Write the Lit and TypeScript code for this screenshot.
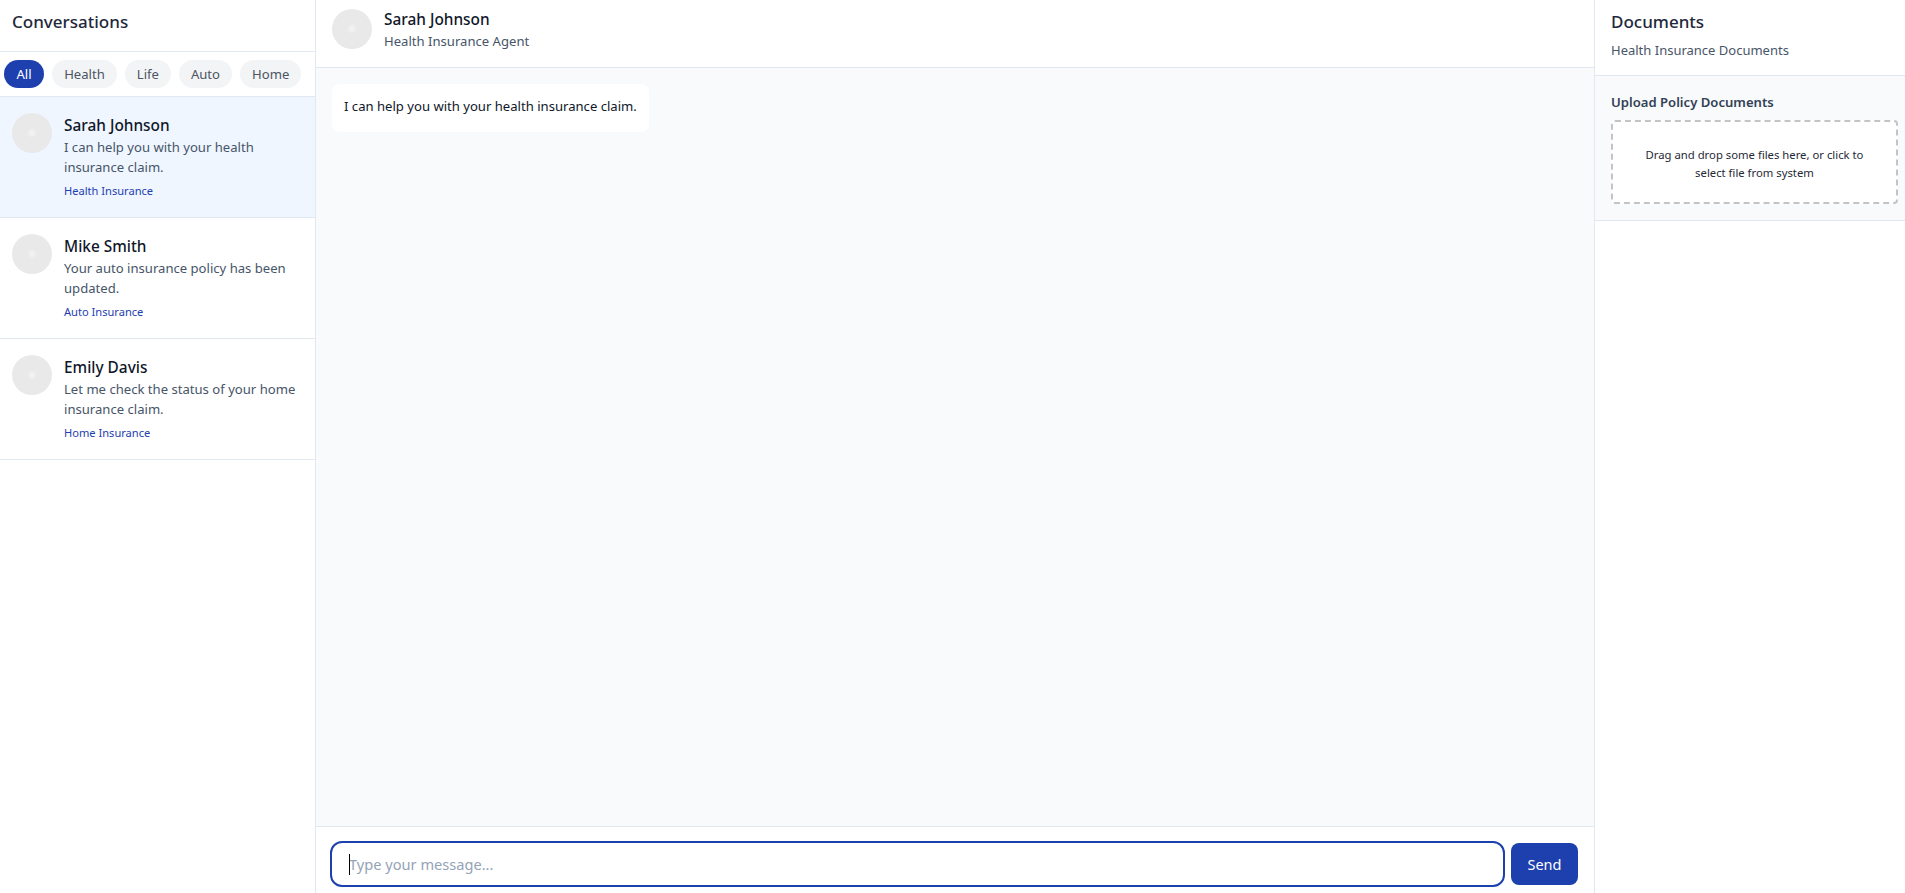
import { LitElement, html, css } from "lit";
import { customElement } from "lit/decorators.js";

const convs = [
  { name: "Sarah Johnson", msg: "I can help you with your health insurance claim.", tag: "Health Insurance", active: true },
  { name: "Mike Smith", msg: "Your auto insurance policy has been updated.", tag: "Auto Insurance", active: false },
  { name: "Emily Davis", msg: "Let me check the status of your home insurance claim.", tag: "Home Insurance", active: false },
];
const pills = ["All", "Health", "Life", "Auto", "Home"];

@customElement("app-root")
export class AppRoot extends LitElement {
  static styles = css`
    :host { display: block; height: 893px; font-family: "Noto Sans", "Open Sans", sans-serif; color: #1e293b; overflow: hidden; }
    * { box-sizing: border-box; }
    .app { display: flex; height: 893px; background: #fff; }
    .left { width: 316px; flex: none; border-right: 1px solid #e2e8f0; display: flex; flex-direction: column; }
    .left-head { height: 52px; padding: 0 12px 9px; border-bottom: 1px solid #e2e8f0; display: flex; align-items: center; font-size: 17px; font-weight: 500; }
    .pills { height: 45px; padding: 8px 4px; display: flex; gap: 8px; border-bottom: 1px solid #e2e8f0; }
    .pill { height: 28px; padding: 0 12px; border-radius: 14px; background: #f3f4f6; color: #4b5563; font-size: 13.1px; display: flex; align-items: center; }
    .pill.on { background: #1e40af; color: #fff; padding: 0 12.5px; }
    .item { height: 121px; padding: 16px 12px; display: flex; gap: 12px; border-bottom: 1px solid #e2e8f0; }
    .item.on { background: #eff6ff; }
    .avatar { width: 40px; height: 40px; border-radius: 50%; flex: none; background: radial-gradient(circle, #f4f4f4 0, #f0f0f0 2px, #e9e9e9 5px); }
    .item-body { flex: 1; min-width: 0; }
    .item-name { font-size: 15.4px; font-weight: 500; line-height: 24px; padding-top: 1px; margin-bottom: -1px; color: #0f172a; }
    .item-msg { font-size: 13.1px; line-height: 20px; color: #475569; }
    .item-tag { font-size: 11.1px; line-height: 16px; color: #1e40af; margin-top: 6px; }
    .mid { flex: 1; min-width: 0; display: flex; flex-direction: column; }
    .mid-head { height: 68px; padding: 9px 16px; border-bottom: 1px solid #e2e8f0; display: flex; gap: 12px; }
    .mid-name { font-size: 15.4px; font-weight: 500; line-height: 20px; padding-top: 1px; margin-bottom: -1px; color: #0f172a; }
    .mid-sub { font-size: 13.1px; line-height: 20px; color: #475569; margin-top: 2px; }
    .msgs { flex: 1; background: #f8fafc; padding: 16px; display: flex; flex-direction: column; align-items: flex-start; }
    .bubble { background: #fff; border-radius: 8px; padding: 12px; font-size: 13.1px; line-height: 20px; height: 48px; color: #0f172a; white-space: nowrap; }
    .composer { height: 67px; border-top: 1px solid #e2e8f0; padding: 14px 16px 5px 14px; display: flex; gap: 6px; align-items: flex-start; }
    .field { position: relative; flex: 1; height: 46px; }
    .input { width: 100%; height: 100%; border: 2px solid #1e40af; border-radius: 12px; padding: 0 17px; font: inherit; font-size: 14.6px; color: #1e293b; background: #fff; outline: none; caret-color: transparent; }
    .input::placeholder { color: #94a3b8; opacity: 1; }
    .caret { position: absolute; left: 19px; top: 13px; width: 1px; height: 21px; background: #000; }
    .send { width: 67px; height: 42px; margin-top: 2px; background: #1e40af; color: #fff; border: none; border-radius: 8px; font: inherit; font-size: 14.5px; }
    .right { width: 311px; flex: none; border-left: 1px solid #e2e8f0; display: flex; flex-direction: column; }
    .right-head { height: 76px; padding: 12px 16px 0; border-bottom: 1px solid #e2e8f0; }
    .right-title { font-size: 17px; font-weight: 500; line-height: 20px; color: #1e293b; }
    .right-sub { font-size: 13px; line-height: 20px; color: #475569; margin-top: 8px; }
    .upload { height: 145px; background: #f8fafc; border-bottom: 1px solid #e2e8f0; padding: 16px 7px 0 16px; }
    .upload-title { font-size: 13.1px; font-weight: 600; line-height: 20px; color: #334155; margin-bottom: 8px; }
    .drop { height: 84px; border: 2px dashed #c4c4c4; border-radius: 4px; background: #fff; display: flex; align-items: center; justify-content: center; text-align: center; padding: 4px 24px 0; font-size: 11.3px; line-height: 18px; color: #1f2937; }
  `;

  render() {
    return html`<div class="app">
      <aside class="left">
        <div class="left-head">Conversations</div>
        <div class="pills">${pills.map((p, i) => html`<div class="pill ${i === 0 ? "on" : ""}">${p}</div>`)}</div>
        ${convs.map((c) => html`<div class="item ${c.active ? "on" : ""}">
          <div class="avatar"></div>
          <div class="item-body">
            <div class="item-name">${c.name}</div>
            <div class="item-msg">${c.msg}</div>
            <div class="item-tag">${c.tag}</div>
          </div>
        </div>`)}
      </aside>
      <main class="mid">
        <div class="mid-head">
          <div class="avatar"></div>
          <div>
            <div class="mid-name">Sarah Johnson</div>
            <div class="mid-sub">Health Insurance Agent</div>
          </div>
        </div>
        <div class="msgs"><div class="bubble">I can help you with your health insurance claim.</div></div>
        <div class="composer">
          <div class="field"><input class="input" placeholder="Type your message..." /><span class="caret"></span></div>
          <button class="send">Send</button>
        </div>
      </main>
      <aside class="right">
        <div class="right-head">
          <div class="right-title">Documents</div>
          <div class="right-sub">Health Insurance Documents</div>
        </div>
        <div class="upload">
          <div class="upload-title">Upload Policy Documents</div>
          <div class="drop">Drag and drop some files here, or click to select file from system</div>
        </div>
      </aside>
    </div>`;
  }
}
